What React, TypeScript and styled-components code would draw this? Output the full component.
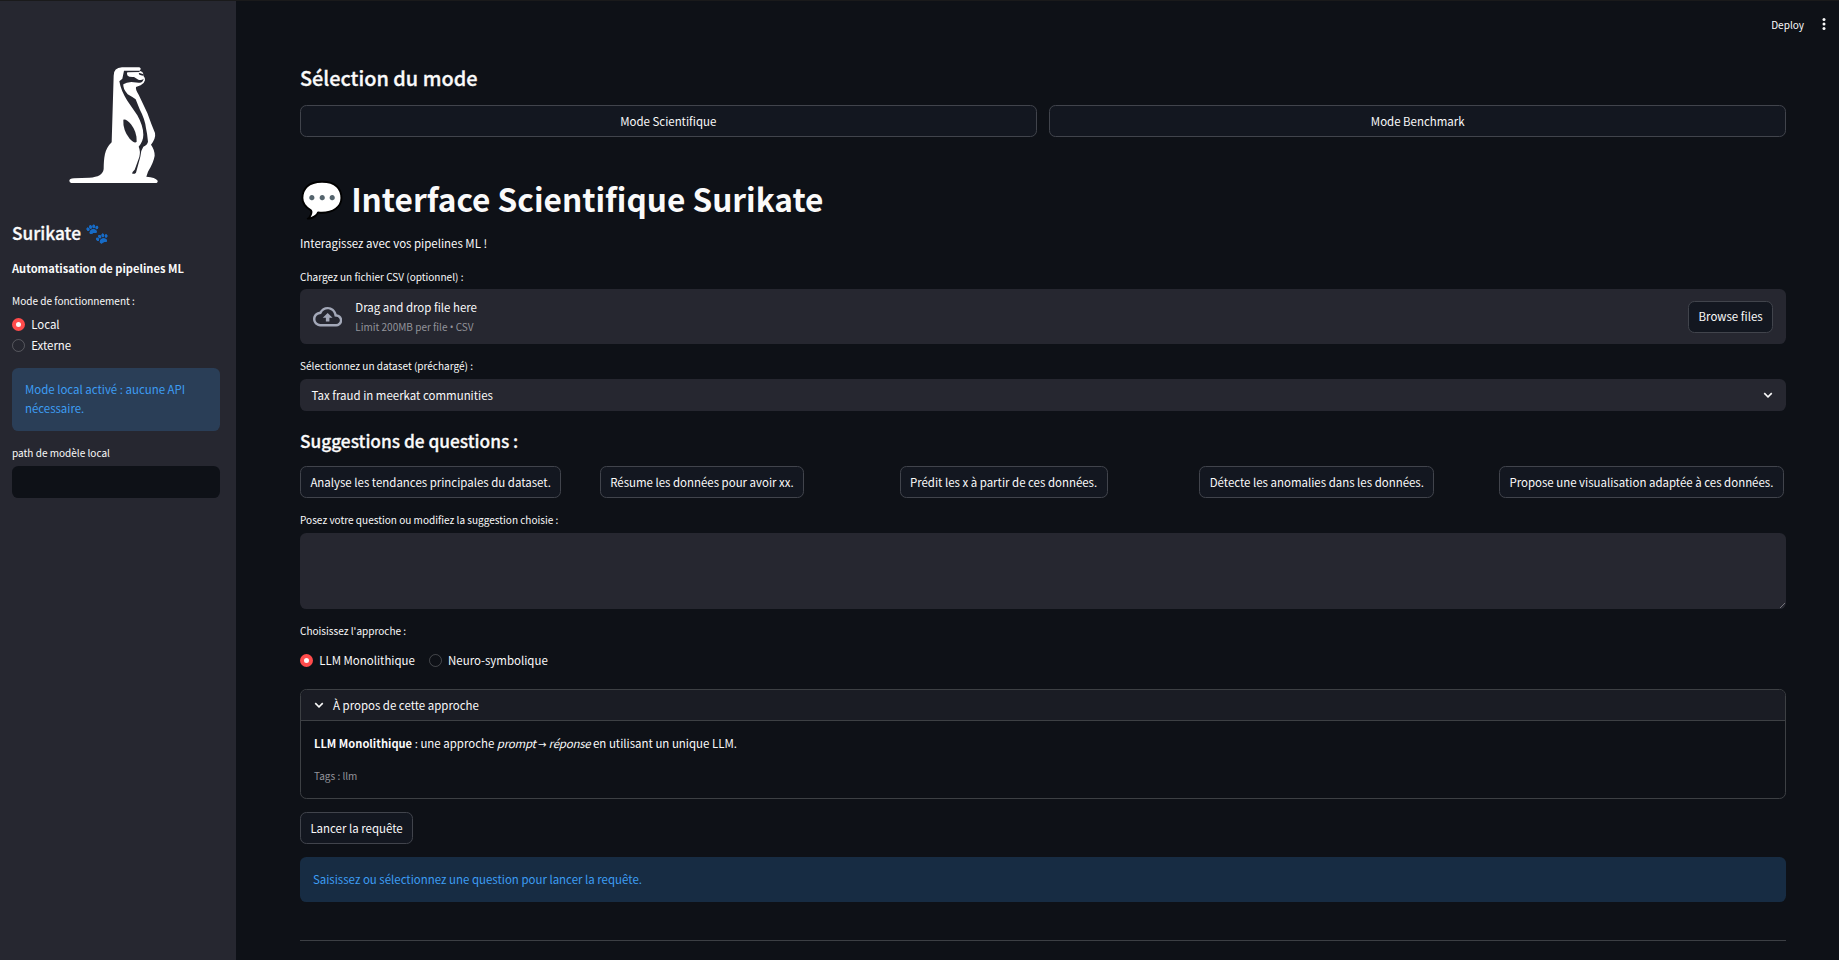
import React from "react";
import styled, { createGlobalStyle, css } from "styled-components";

const c = {
  bg: "#0e1117",
  panel: "#262730",
  button: "#131720",
  line: "#41444c",
  text: "#fafafa",
  muted: "#92939a",
  red: "#ff4b4b",
  blue: "#3d9df3",
};

const GlobalStyle = createGlobalStyle`
  * { box-sizing: border-box; }
  html, body { margin: 0; height: 960px; overflow: hidden; background: ${c.bg}; }
  body, button, input, textarea {
    font-family: "Noto Sans CJK SC", "Noto Sans", sans-serif;
    font-size: 11.46px;
    color: ${c.text};
  }
  h1, h2, h3, p { margin: 0; white-space: nowrap; }
`;

const Page = styled.div`
  display: flex;
  height: 960px;
  border-top: 1px solid #1a1a1b;
`;

const Sidebar = styled.aside`
  width: 236px;
  flex: none;
  background: ${c.panel};
  padding: 54px 16px 0 12px;
  display: flex;
  flex-direction: column;
`;

const Logo = styled.svg`
  width: 110px;
  height: 140px;
  margin-left: 48px;
  flex: none;
`;

const Main = styled.main`
  flex: 1;
  display: flex;
  flex-direction: column;
  position: relative;
  padding: 64px 53px 0 64px;
`;

const Toolbar = styled.header`
  position: absolute;
  top: 13px;
  right: 11px;
  height: 20px;
  display: flex;
  align-items: center;
  gap: 16px;
  font-size: 10.04px;
`;

const Heading = styled.h2<{ $size: number; $height: number; $top?: number }>`
  font-size: ${(p) => p.$size}px;
  line-height: ${(p) => p.$height}px;
  margin-top: ${(p) => p.$top ?? 0}px;
  font-weight: 500;
  -webkit-text-stroke: 0.3px ${c.text};
`;

const Title = styled.h1`
  font-size: 31.6px;
  line-height: 42px;
  font-weight: 700;
  margin-top: 40px;
`;

const Emoji = styled.span`
  font-size: 1.12em;
  line-height: 0;
`;

const Strong = styled.strong`
  font-size: 0.97em;
  font-weight: 700;
`;

const Em = styled.em`
  letter-spacing: -0.22px;
`;

const Arrow = styled.span`
  font-family: "DejaVu Sans", sans-serif;
  font-size: 10px;
  font-style: normal;
  line-height: 0;
`;

const Bullet = styled.span`
  font-family: "Open Sans", sans-serif;
  line-height: 0;
`;

const Text = styled.p<{ $top?: number }>`
  line-height: 20px;
  margin-top: ${(p) => p.$top ?? 0}px;
`;

const Label = styled.p<{ $top: number }>`
  font-size: 10.04px;
  line-height: 18px;
  margin-top: ${(p) => p.$top}px;
`;

const Small = styled.p`
  font-size: 10.02px;
  line-height: 18px;
  color: ${c.muted};
`;

const Button = styled.button<{ $start?: boolean; $top?: number }>`
  height: 32px;
  padding: 0 9.4px 1px;
  margin: ${(p) => p.$top ?? 0}px 0 0;
  border: 1px solid ${c.line};
  border-radius: 6.4px;
  background: ${c.button};
  line-height: 20px;
  white-space: nowrap;
  ${(p) => p.$start && css`align-self: flex-start; justify-self: start;`}
`;

const Columns = styled.div<{ $count: number; $top: number }>`
  display: grid;
  grid-template-columns: repeat(${(p) => p.$count}, minmax(0, 1fr));
  column-gap: 12.8px;
  margin-top: ${(p) => p.$top}px;
`;

const Uploader = styled.section`
  display: flex;
  align-items: center;
  height: 55px;
  margin-top: 3px;
  padding: 0 13px;
  border-radius: 6.4px;
  background: ${c.panel};
`;

const UploadText = styled.div`
  display: grid;
  gap: 1px;
  flex: 1;
  margin-left: 13px;
  padding-bottom: 1px;
`;

const Select = styled.div`
  display: flex;
  align-items: center;
  justify-content: space-between;
  height: 32px;
  margin-top: 4px;
  padding: 0 12px 0 11.6px;
  border-radius: 6.4px;
  background: ${c.panel};
`;

const TextAreaBox = styled.div`
  position: relative;
  height: 76px;
  margin-top: 4px;
`;

const TextArea = styled.textarea`
  display: block;
  width: 100%;
  height: 100%;
  border: 0;
  border-radius: 6.4px;
  background: ${c.panel};
  resize: none;
`;

const Grip = styled.svg`
  position: absolute;
  right: 0;
  bottom: 0;
`;

const TextInput = styled.input`
  height: 32px;
  margin-top: 4px;
  border: 0;
  border-radius: 6.4px;
  background: ${c.bg};
`;

const RadioGroup = styled.div<{ $top: number; $row?: boolean }>`
  display: flex;
  flex-direction: ${(p) => (p.$row ? "row" : "column")};
  gap: ${(p) => (p.$row ? "14px" : "0.5px")};
  margin-top: ${(p) => p.$top}px;
`;

const RadioItem = styled.label`
  display: flex;
  align-items: center;
  gap: 6.2px;
  height: 20px;
  line-height: 20px;
`;

const Dot = styled.span<{ $on?: boolean }>`
  width: 13px;
  height: 13px;
  border-radius: 50%;
  margin-top: 1px;
  border: ${(p) => (p.$on ? `4px solid ${c.red}` : "1px solid rgba(250, 250, 250, 0.22)")};
  background: ${(p) => (p.$on ? c.text : "transparent")};
`;

const Info = styled.div<{ $top: number }>`
  margin-top: ${(p) => p.$top}px;
  padding: 12.9px;
  border-radius: 6.4px;
  background: rgba(61, 157, 243, 0.2);
  color: ${c.blue};
  line-height: 19px;
`;

const Expander = styled.section`
  margin-top: 19px;
  height: 110px;
  border: 1px solid #3d4044;
  border-radius: 6.4px;
  overflow: hidden;
`;

const ExpanderHead = styled.header`
  display: flex;
  align-items: center;
  gap: 8.5px;
  height: 31px;
  padding-left: 11.5px;
  border-bottom: 1px solid #3d4044;
  background: #1a1c24;
`;

const ExpanderBody = styled.div`
  padding: 12px 13px;
  display: flex;
  flex-direction: column;
  gap: 13.5px;
`;

const Rule = styled.hr`
  width: 100%;
  margin: 38.4px 0 0;
  border: 0;
  border-top: 1px solid #3c3f44;
`;

const Chevron = () => (
  <svg width="12" height="12" viewBox="0 0 24 24" fill={c.text}>
    <path d="M5.6 7.1 12 13.5l6.400-6.400 2.200 2.200L12 17.900 3.400 9.300z" />
  </svg>
);

const Meerkat = () => (
  <Logo viewBox="0 0 330 420">
    <path
      fill="#fff"
      d="M28 377Q28 371 42 370L88 368Q128 366 131 342C132 310 132 284 155 262L161 62Q161 38 186 37L238 37Q246 41 239 47L247 51Q251 56 250 62Q256 68 255 76Q252 87 242 91L228 96Q226 104 236 119L262 174Q274 208 285 234Q288 250 273 269Q284 284 284 302Q281 322 264 350L259 365Q286 367 293 377Q294 384 286 384L34 384Q28 383 28 377Z"
    />
    <g fill={c.panel}>
      <path d="M192 47L240 47L238 51L202 52Q199 56 203 62Q207 67 222 66L235 74Q245 77 251 71Q248 85 236 83L214 81Q199 82 190 88Q188 101 203 118Q219 127 227 133L239 163Q255 193 258 220Q262 237 264 260Q262 270 250 275Q241 288 241 305L228 353Q222 359 216 355Q218 349 224 344L238 306Q242 288 236 275Q250 258 250 239Q250 213 232 181L202 137Q183 108 178 79L187 71Z" />
      <path d="M236 53L251 58L248 62L238 59Z" />
      <path d="M190 194Q199 191 213 208Q231 231 230 260Q224 267 209 251Q188 225 190 194Z" />
    </g>
  </Logo>
);

const Cloud = () => (
  <svg width="29.300" height="29.300" viewBox="0 0 24 24" fill="#a3a8b8">
    <path d="M19.350 10.040C18.670 6.590 15.640 4 12 4 9.110 4 6.600 5.640 5.350 8.040 2.340 8.360 0 10.910 0 14c0 3.310 2.690 6 6 6h13c2.760 0 5-2.240 5-5 0-2.640-2.050-4.780-4.650-4.960zM19 18H6c-2.210 0-4-1.790-4-4 0-2.050 1.530-3.760 3.560-3.970l1.070-.11.5-.95C8.080 7.140 9.940 6 12 6c2.620 0 4.880 1.860 5.390 4.430l.3 1.500 1.530.11c1.560.1 2.780 1.410 2.780 2.960 0 1.650-1.350 3-3 3zM8 13h2.550v3h2.900v-3H16l-4-4z" />
  </svg>
);

const Kebab = () => (
  <svg width="8" height="16" viewBox="0 0 8 16" fill={c.text}>
    <circle cx="4" cy="3.600" r="1.500" />
    <circle cx="4" cy="8" r="1.500" />
    <circle cx="4" cy="12.400" r="1.500" />
  </svg>
);

const suggestions = [
  "Analyse les tendances principales du dataset.",
  "Résume les données pour avoir xx.",
  "Prédit les x à partir de ces données.",
  "Détecte les anomalies dans les données.",
  "Propose une visualisation adaptée à ces données.",
];

const Radio = ({ on, children }: { on?: boolean; children: React.ReactNode }) => (
  <RadioItem>
    <Dot $on={on} />
    <span>{children}</span>
  </RadioItem>
);

export default function App() {
  return (
    <>
      <GlobalStyle />
      <Page>
        <Sidebar>
          <Meerkat />
          <Heading $size={17.28} $height={24} $top={26}>Surikate <Emoji>🐾</Emoji></Heading>
          <Text $top={13}><Strong>Automatisation de pipelines ML</Strong></Text>
          <Label $top={14}>Mode de fonctionnement :</Label>
          <RadioGroup $top={4}>
            <Radio on>Local</Radio>
            <Radio>Externe</Radio>
          </RadioGroup>
          <Info $top={13}>Mode local activé : aucune API nécessaire.</Info>
          <Label $top={13.2}>path de modèle local</Label>
          <TextInput />
        </Sidebar>
        <Main>
          <Toolbar>
            <span>Deploy</span>
            <Kebab />
          </Toolbar>
          <Heading $size={19.9} $height={26}>Sélection du mode</Heading>
          <Columns $count={2} $top={14}>
            <Button>Mode Scientifique</Button>
            <Button>Mode Benchmark</Button>
          </Columns>
          <Title><Emoji>💬</Emoji> Interface Scientifique Surikate</Title>
          <Text $top={14}>Interagissez avec vos pipelines ML !</Text>
          <Label $top={15}>Chargez un fichier CSV (optionnel) :</Label>
          <Uploader>
            <Cloud />
            <UploadText>
              <Text>Drag and drop file here</Text>
              <Small>Limit 200MB per file <Bullet>•</Bullet> CSV</Small>
            </UploadText>
            <Button>Browse files</Button>
          </Uploader>
          <Label $top={13}>Sélectionnez un dataset (préchargé) :</Label>
          <Select>
            <span>Tax fraud in meerkat communities</span>
            <Chevron />
          </Select>
          <Heading as="h3" $size={17.28} $height={24} $top={18}>Suggestions de questions :</Heading>
          <Columns $count={5} $top={13}>
            {suggestions.map((s) => (
              <Button key={s} $start>{s}</Button>
            ))}
          </Columns>
          <Label $top={13}>Posez votre question ou modifiez la suggestion choisie :</Label>
          <TextAreaBox>
            <TextArea />
            <Grip width="8" height="8" viewBox="0 0 8 8" stroke="#73747a" strokeWidth="1">
              <path d="M2 7 7 2" />
            </Grip>
          </TextAreaBox>
          <Label $top={13}>Choisissez l'approche :</Label>
          <RadioGroup $row $top={10}>
            <Radio on>LLM Monolithique</Radio>
            <Radio>Neuro-symbolique</Radio>
          </RadioGroup>
          <Expander>
            <ExpanderHead>
              <Chevron />
              <span>À propos de cette approche</span>
            </ExpanderHead>
            <ExpanderBody>
              <Text>
                <Strong>LLM Monolithique</Strong> : une approche <Em>prompt <Arrow>→</Arrow> réponse</Em> en utilisant un unique LLM.
              </Text>
              <Small>Tags : llm</Small>
            </ExpanderBody>
          </Expander>
          <Button $start $top={13}>Lancer la requête</Button>
          <Info $top={12.8}>Saisissez ou sélectionnez une question pour lancer la requête.</Info>
          <Rule />
        </Main>
      </Page>
    </>
  );
}
